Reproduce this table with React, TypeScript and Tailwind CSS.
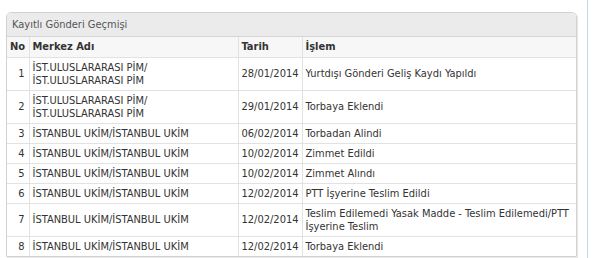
import React from "react";

type Row = { no: number; merkez: string[]; tarih: string; islem: string[] };

const ROWS: Row[] = [
    { no: 1, merkez: ["İST.ULUSLARARASI PİM/", "İST.ULUSLARARASI PİM"], tarih: "28/01/2014", islem: ["Yurtdışı Gönderi Geliş Kaydı Yapıldı"] },
    { no: 2, merkez: ["İST.ULUSLARARASI PİM/", "İST.ULUSLARARASI PİM"], tarih: "29/01/2014", islem: ["Torbaya Eklendi"] },
    { no: 3, merkez: ["İSTANBUL UKİM/İSTANBUL UKİM"], tarih: "06/02/2014", islem: ["Torbadan Alindi"] },
    { no: 4, merkez: ["İSTANBUL UKİM/İSTANBUL UKİM"], tarih: "10/02/2014", islem: ["Zimmet Edildi"] },
    { no: 5, merkez: ["İSTANBUL UKİM/İSTANBUL UKİM"], tarih: "10/02/2014", islem: ["Zimmet Alındı"] },
    { no: 6, merkez: ["İSTANBUL UKİM/İSTANBUL UKİM"], tarih: "12/02/2014", islem: ["PTT İşyerine Teslim Edildi"] },
    { no: 7, merkez: ["İSTANBUL UKİM/İSTANBUL UKİM"], tarih: "12/02/2014", islem: ["Teslim Edilemedi Yasak Madde - Teslim Edilemedi/PTT", "İşyerine Teslim"] },
    { no: 8, merkez: ["İSTANBUL UKİM/İSTANBUL UKİM"], tarih: "12/02/2014", islem: ["Torbaya Eklendi"] },
];

const Lines = ({ lines }: { lines: string[] }) => (
    <>
        {lines.map((l) => (
            <div key={l}>{l}</div>
        ))}
    </>
);

export default function App() {
    return (
        <div
            className="w-[588px] h-[258px] border-r border-[#c3d5e8] bg-white pl-[6px] pt-[12px] text-[11px] leading-[13px] text-[#333]"
            style={{ fontFamily: '"DejaVu Sans", Verdana, sans-serif', fontStretch: "condensed" }}
        >
            <div className="w-[571px] rounded-t-[5px] border border-[#d2d2d2] shadow-[1px_1px_1px_#e6e6e6]">
                <div className="h-[24px] flex items-center rounded-t-[5px] border-b border-[#d6d6d6] bg-[#ebebeb] px-[5px] text-[#555]">
                    Kayıtlı Gönderi Geçmişi
                </div>
                <table className="w-full border-collapse">
                    <colgroup>
                        <col className="w-[22px]" />
                        <col className="w-[209px]" />
                        <col className="w-[62px]" />
                        <col />
                    </colgroup>
                    <thead>
                        <tr className="h-[20px] bg-[#f7f7f7] font-bold">
                            <th className="border-b border-r border-[#e2e2e2] px-[3px] text-left">No</th>
                            <th className="border-b border-r border-[#e2e2e2] px-[3px] text-left">Merkez Adı</th>
                            <th className="border-b border-r border-[#e2e2e2] px-[3px] text-left">Tarih</th>
                            <th className="border-b border-[#e2e2e2] px-[3px] text-left">İşlem</th>
                        </tr>
                    </thead>
                    <tbody>
                        {ROWS.map((r) => (
                            <tr key={r.no} className="border-b border-[#e2e2e2] last:border-b-0">
                                <td className="border-r border-[#e2e2e2] py-[3px] pr-[4px] text-right align-middle">{r.no}</td>
                                <td className="border-r border-[#e2e2e2] py-[3px] px-[3px] align-middle"><Lines lines={r.merkez} /></td>
                                <td className="border-r border-[#e2e2e2] py-[3px] px-[3px] align-middle">{r.tarih}</td>
                                <td className="py-[3px] px-[3px] align-middle"><Lines lines={r.islem} /></td>
                            </tr>
                        ))}
                    </tbody>
                </table>
            </div>
        </div>
    );
}
